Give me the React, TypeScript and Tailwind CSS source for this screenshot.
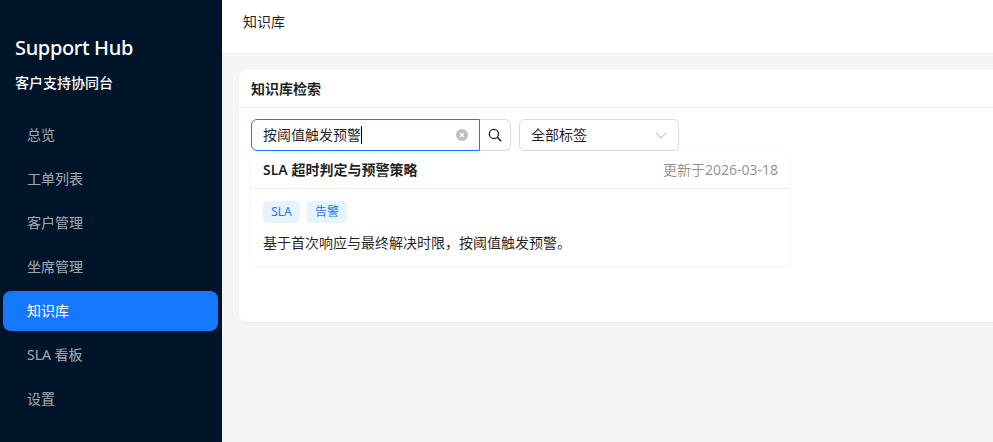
import React from 'react'

const navItems = ['总览', '工单列表', '客户管理', '坐席管理', '知识库', 'SLA 看板', '设置']
const fontStack = "font-['Noto_Sans','Noto_Sans_CJK_SC',sans-serif]"

const Sidebar = () => (
    <aside className="w-[222px] shrink-0 bg-[#001529] flex flex-col">
        <div className="pl-[15px] pt-[35px]">
            <div className="text-[20px] leading-[26px] tracking-[-0.35px] font-medium text-white">Support Hub</div>
            <div className="mt-[11px] text-[14px] leading-[22px] font-medium text-white">客户支持协同台</div>
        </div>
        <nav className="mt-[21px] flex flex-col gap-[4px] pl-[3px] w-[218px]">
            {navItems.map(item => (
                <div
                    key={item}
                    className={`h-[40px] flex items-center pl-[24px] pb-[2px] rounded-[8px] text-[14px] ${item === '知识库' ? 'bg-[#1677ff] text-white' : 'text-[#ffffffa6]'}`}
                >
                    {item}
                </div>
            ))}
        </nav>
    </aside>
)

const SearchBar = () => (
    <div className="flex items-center gap-[8px]">
        <div className="flex w-[260px] h-[32px]">
            <div className="flex-1 flex items-center pl-[11px] pr-[11px] bg-white border border-[#1677ff] rounded-l-[6px]">
                <span className="text-[14px] text-[#000000e0] pb-[1px]">按阈值触发预警</span>
                <span className="w-px h-[18px] bg-black" />
                <span className="ml-auto w-[12px] h-[12px] rounded-full bg-[#00000040] flex items-center justify-center">
                    <svg viewBox="0 0 12 12" className="w-[12px] h-[12px]">
                        <path d="M4 4l4 4M8 4l-4 4" stroke="white" strokeWidth="1.2" fill="none" />
                    </svg>
                </span>
            </div>
            <button className="w-[31px] flex items-center justify-center bg-white border border-l-0 border-[#d9d9d9] rounded-r-[6px]">
                <svg viewBox="0 0 14 14" className="w-[14px] h-[14px]" fill="none" stroke="#000000e0">
                    <circle cx="5.9" cy="5.9" r="4.6" strokeWidth="1.3" />
                    <path d="M9.3 9.3l3.9 3.9" strokeWidth="1.6" />
                </svg>
            </button>
        </div>
        <div className="w-[160px] h-[32px] flex items-center justify-between pl-[11px] pr-[11px] bg-white border border-[#d9d9d9] rounded-[6px]">
            <span className="text-[14px] text-[#000000e0] pb-[1px]">全部标签</span>
            <svg viewBox="0 0 12 12" className="w-[12px] h-[12px]" fill="none" stroke="#00000040" strokeWidth="1.1">
                <path d="M1 3.5l5 5.5 5-5.5" />
            </svg>
        </div>
    </div>
)

const ResultCard = () => (
    <div className="absolute left-[12px] top-[81px] w-[539px] bg-white rounded-[8px] shadow-[0_1px_4px_rgba(0,0,0,0.06)]">
        <div className="h-[38px] flex items-center justify-between px-[12px] border-b border-[#f0f0f0]">
            <span className="text-[14px] font-semibold text-[#000000e0]">SLA 超时判定与预警策略</span>
            <span className="text-[14px] text-[#00000073]">更新于2026-03-18</span>
        </div>
        <div className="px-[12px] pt-[12px] pb-[12px]">
            <div className="flex gap-[7px]">
                <span className="w-[37px] h-[22px] flex items-center justify-center rounded-[4px] bg-[#e6f4ff] text-[#1677ff] text-[12px]">SLA</span>
                <span className="w-[40px] h-[22px] flex items-center justify-center rounded-[4px] bg-[#e6f4ff] text-[#1677ff] text-[12px]">告警</span>
            </div>
            <p className="mt-[9px] text-[14px] leading-[22px] text-[#000000e0]">基于首次响应与最终解决时限，按阈值触发预警。</p>
        </div>
    </div>
)

export default function App() {
    return (
        <div className={`w-[993px] h-[442px] flex overflow-hidden bg-[#f5f5f5] ${fontStack}`}>
            <Sidebar />
            <main className="flex-1 min-w-0 flex flex-col">
                <header className="h-[54px] shrink-0 bg-white border-b border-[#f0f0f0] pl-[21px] pt-[11px] text-[14px] leading-[22px] text-[#000000e0]">
                    知识库
                </header>
                <div className="pl-[17px] pt-[16px]">
                    <section className="relative w-[900px] h-[252px] bg-white rounded-[8px] shadow-[0_1px_2px_rgba(0,0,0,0.04)]">
                        <div className="h-[38px] flex items-center pl-[12px] border-b border-[#f0f0f0] text-[14px] font-semibold text-[#000000e0]">
                            知识库检索
                        </div>
                        <div className="pl-[12px] pt-[11px]">
                            <SearchBar />
                        </div>
                        <ResultCard />
                    </section>
                </div>
            </main>
        </div>
    )
}
